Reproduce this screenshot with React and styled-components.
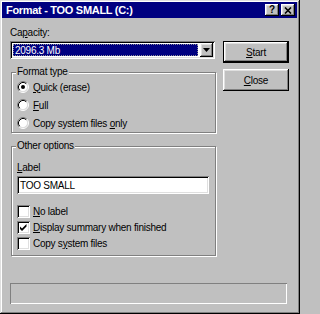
import React from "react";
import styled, { createGlobalStyle } from "styled-components";

const GlobalStyle = createGlobalStyle`
  html, body {
    margin: 0;
    padding: 0;
    background: #c0c0c0;
  }
  body {
    font-family: "Liberation Sans", Arial, sans-serif;
  }
`;

const raised = `
  box-shadow: inset -1px -1px #000, inset 1px 1px #fff,
    inset -2px -2px #808080, inset 2px 2px #dfdfdf;
`;

const sunken = `
  box-shadow: inset 1px 1px #808080, inset -1px -1px #fff,
    inset 2px 2px #000, inset -2px -2px #dfdfdf;
`;

const Window = styled.div`
  box-sizing: border-box;
  width: 300px;
  height: 314px;
  padding: 2px 3px 3px 2px;
  display: flex;
  flex-direction: column;
  background: #c0c0c0;
  box-shadow: inset -1px -1px #000, inset 1px 1px #dfdfdf,
    inset -2px -2px #808080, inset 2px 2px #fff;
  font-size: 10px;
  letter-spacing: -0.25px;
  color: #000;
`;

const TitleBar = styled.div`
  height: 16px;
  display: flex;
  align-items: center;
  padding: 0 2px 0 4px;
  background: #000080;
  color: #fff;
  font-weight: bold;
  font-size: 11px;
  letter-spacing: -0.3px;
`;

const TitleText = styled.span`
  flex: 1;
  white-space: nowrap;
`;

const TitleButtons = styled.div`
  display: flex;
  gap: 2px;
`;

const TitleButton = styled.div`
  box-sizing: border-box;
  width: 14px;
  height: 12px;
  display: flex;
  align-items: center;
  justify-content: center;
  background: #c0c0c0;
  color: #000;
  font-size: 10px;
  font-weight: bold;
  line-height: 1;
  ${raised}
`;

const Body = styled.div`
  display: flex;
  padding-left: 8px;
`;

const LeftColumn = styled.div`
  width: 206px;
  display: flex;
  flex-direction: column;
`;

const RightColumn = styled.div`
  margin-left: 7px;
  margin-top: 23px;
  display: flex;
  flex-direction: column;
  gap: 6px;
`;

const FieldLabel = styled.div`
  line-height: 12px;
  margin-top: ${(p) => p.$top || 0}px;
`;

const Combo = styled.div`
  box-sizing: border-box;
  width: 205px;
  height: 18px;
  margin-top: 2px;
  padding: 2px;
  display: flex;
  background: #fff;
  ${sunken}
`;

const ComboValue = styled.div`
  box-sizing: border-box;
  flex: 1;
  margin: 1px 2px 1px 1px;
  padding-left: 1px;
  display: flex;
  align-items: center;
  background: #000080;
  color: #fff;
  border: 1px dotted rgba(255, 255, 170, 0.55);
`;

const ComboArrow = styled.div`
  box-sizing: border-box;
  width: 13px;
  height: 14px;
  display: flex;
  align-items: center;
  justify-content: center;
  background: #c0c0c0;
  ${raised}
`;

const Group = styled.fieldset`
  box-sizing: border-box;
  width: 205px;
  min-width: 0;
  margin: 7px 0 0 1px;
  padding: ${(p) => p.$pad};
  border: 1px solid #808080;
  box-shadow: 1px 1px 0 #fff, inset 1px 1px 0 #fff;
`;

const Legend = styled.legend`
  margin-left: -1px;
  padding: 0 1px;
  line-height: 12px;
  background: #c0c0c0;
`;

const OptionRow = styled.label`
  height: ${(p) => p.$h}px;
  display: flex;
  align-items: center;
  gap: ${(p) => p.$gap}px;
  white-space: nowrap;
`;

const CheckBox = styled.span`
  box-sizing: border-box;
  width: 13px;
  height: 13px;
  padding: 2px;
  display: flex;
  background: #fff;
  ${sunken}
`;

const TextBox = styled.div`
  box-sizing: border-box;
  width: 192px;
  height: 18px;
  margin-top: 2px;
  padding-left: 3px;
  display: flex;
  align-items: center;
  background: #fff;
  ${sunken}
`;

const Checks = styled.div`
  margin-top: 9px;
`;

const Button = styled.div`
  box-sizing: border-box;
  width: 66px;
  height: 22px;
  display: flex;
  align-items: center;
  justify-content: center;
  background: #c0c0c0;
  border: ${(p) => (p.$default ? "1px solid #000" : "none")};
  ${raised}
`;

const StatusField = styled.div`
  box-sizing: border-box;
  height: 21px;
  margin: auto 10px 7px 8px;
  box-shadow: inset 1px 1px #808080, inset -1px -1px #fff;
`;

const Radio = ({ checked }) => (
  <svg width="12" height="12" viewBox="0 0 12 12">
    <circle cx="6" cy="6" r="4.5" fill="#fff" />
    <path d="M2.11 9.89 A5.5 5.5 0 0 1 9.89 2.11" fill="none" stroke="#808080" />
    <path d="M9.89 2.11 A5.5 5.5 0 0 1 2.11 9.89" fill="none" stroke="#fff" />
    <path d="M2.82 9.18 A4.5 4.5 0 0 1 9.18 2.82" fill="none" stroke="#000" />
    <path d="M9.18 2.82 A4.5 4.5 0 0 1 2.82 9.18" fill="none" stroke="#dfdfdf" />
    {checked && <circle cx="6" cy="6" r="2" fill="#000" />}
  </svg>
);

const Check = ({ checked }) => (
  <CheckBox>
    {checked && (
      <svg width="9" height="9" viewBox="0 0 9 9">
        <polygon points="1,3.5 3,5.5 7.5,1 7.5,3.5 3,8 1,6" fill="#000" />
      </svg>
    )}
  </CheckBox>
);

export default function App() {
  return (
    <>
      <GlobalStyle />
      <Window>
        <TitleBar>
          <TitleText>Format - TOO SMALL (C:)</TitleText>
          <TitleButtons>
            <TitleButton>?</TitleButton>
            <TitleButton>
              <svg width="8" height="7" viewBox="0 0 8 7">
                <path d="M1 0.5 L7 6.5 M7 0.5 L1 6.5" stroke="#000" strokeWidth="1.6" />
              </svg>
            </TitleButton>
          </TitleButtons>
        </TitleBar>

        <Body>
          <LeftColumn>
            <FieldLabel $top={9}>
              Ca<u>p</u>acity:
            </FieldLabel>
            <Combo>
              <ComboValue>2096.3 Mb</ComboValue>
              <ComboArrow>
                <svg width="7" height="4" viewBox="0 0 7 4">
                  <polygon points="0,0 7,0 3.5,4" fill="#000" />
                </svg>
              </ComboArrow>
            </Combo>

            <Group $pad="0 4px 0 5px">
              <Legend>Format type</Legend>
              <OptionRow $h={18} $gap={4}>
                <Radio checked />
                <span>
                  <u>Q</u>uick (erase)
                </span>
              </OptionRow>
              <OptionRow $h={18} $gap={4}>
                <Radio />
                <span>
                  <u>F</u>ull
                </span>
              </OptionRow>
              <OptionRow $h={18} $gap={4}>
                <Radio />
                <span>
                  Copy system files <u>o</u>nly
                </span>
              </OptionRow>
            </Group>

            <Group $pad="10px 4px 4px 5px">
              <Legend>Other options</Legend>
              <FieldLabel>
                <u>L</u>abel
              </FieldLabel>
              <TextBox>TOO SMALL</TextBox>
              <Checks>
                <OptionRow $h={16} $gap={3}>
                  <Check />
                  <span>
                    <u>N</u>o label
                  </span>
                </OptionRow>
                <OptionRow $h={16} $gap={3}>
                  <Check checked />
                  <span>
                    <u>D</u>isplay summary when finished
                  </span>
                </OptionRow>
                <OptionRow $h={16} $gap={3}>
                  <Check />
                  <span>
                    Copy s<u>y</u>stem files
                  </span>
                </OptionRow>
              </Checks>
            </Group>
          </LeftColumn>

          <RightColumn>
            <Button $default>
              <span>
                <u>S</u>tart
              </span>
            </Button>
            <Button>
              <span>
                <u>C</u>lose
              </span>
            </Button>
          </RightColumn>
        </Body>

        <StatusField />
      </Window>
    </>
  );
}
